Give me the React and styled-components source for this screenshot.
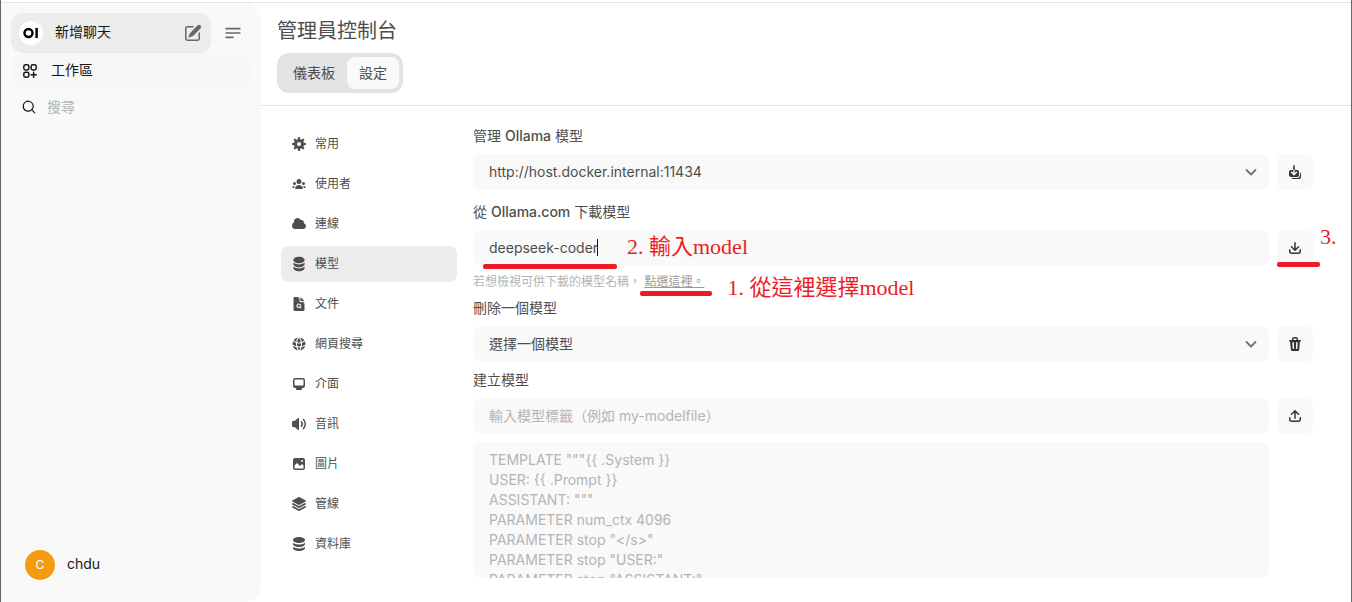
import React, { useState } from "react";
import styled, { createGlobalStyle } from "styled-components";
import {
  HiDocumentMagnifyingGlass,
  HiGlobeAlt,
  HiSquare3Stack3D,
  HiOutlineSquaresPlus,
  HiOutlineBars3BottomLeft,
} from "react-icons/hi2";

const trayPath =
  "M3.5 9.75a.75.75 0 0 0-1.5 0v1.5A2.75 2.75 0 0 0 4.75 14h6.5A2.75 2.75 0 0 0 14 11.25v-1.5a.75.75 0 0 0-1.5 0v1.5c0 .69-.56 1.25-1.25 1.25h-6.5c-.69 0-1.25-.56-1.25-1.25v-1.5Z";

const paths = {
  cog: [
    "M6.955 1.45A.5.5 0 0 1 7.452 1h1.096a.5.5 0 0 1 .497.45l.17 1.699c.484.12.94.312 1.356.562l1.321-1.081a.5.5 0 0 1 .67.033l.774.775a.5.5 0 0 1 .034.67l-1.08 1.32c.25.417.44.873.561 1.357l1.699.17a.5.5 0 0 1 .45.497v1.096a.5.5 0 0 1-.45.497l-1.699.17c-.12.484-.312.94-.562 1.356l1.082 1.322a.5.5 0 0 1-.034.67l-.774.774a.5.5 0 0 1-.67.033l-1.322-1.08c-.416.25-.872.44-1.356.561l-.17 1.699a.5.5 0 0 1-.497.45H7.452a.5.5 0 0 1-.497-.45l-.17-1.699a4.973 4.973 0 0 1-1.356-.562L4.108 13.37a.5.5 0 0 1-.67-.033l-.774-.775a.5.5 0 0 1-.034-.67l1.08-1.32a4.971 4.971 0 0 1-.561-1.357l-1.699-.17A.5.5 0 0 1 1 8.548V7.452a.5.5 0 0 1 .45-.497l1.699-.17c.12-.484.312-.94.562-1.356L2.629 4.107a.5.5 0 0 1 .034-.67l.774-.774a.5.5 0 0 1 .67-.033L5.43 3.71a4.97 4.97 0 0 1 1.356-.561l.17-1.699ZM6 8c0 .538.212 1.026.558 1.385l.057.057a2 2 0 0 0 2.828-2.828l-.058-.056A2 2 0 0 0 6 8Z",
  ],
  users: [
    "M8 8a2.5 2.5 0 1 0 0-5 2.5 2.5 0 0 0 0 5ZM3.156 11.763c.16-.629.44-1.21.813-1.72a2.5 2.5 0 0 0-2.725 1.377c-.136.287.102.58.418.58h1.449c.01-.077.025-.156.045-.237ZM12.847 11.763c.02.08.036.16.046.237h1.446c.316 0 .554-.293.417-.579a2.5 2.5 0 0 0-2.722-1.378c.374.51.653 1.09.813 1.72ZM14 7.5a1.5 1.5 0 1 1-3 0 1.5 1.5 0 0 1 3 0ZM3.5 9a1.5 1.5 0 1 0 0-3 1.5 1.5 0 0 0 0 3ZM5 13c-.552 0-1.013-.455-.876-.99a4.002 4.002 0 0 1 7.753 0c.136.535-.324.99-.877.99H5Z",
  ],
  cloud: [
    "M1 9.5A3.5 3.5 0 0 0 4.5 13H12a3 3 0 0 0 .917-5.857 2.503 2.503 0 0 0-3.198-3.019 3.5 3.5 0 0 0-6.628 2.171A3.5 3.5 0 0 0 1 9.5Z",
  ],
  models: [
    "M10 1c3.866 0 7 1.79 7 4s-3.134 4-7 4-7-1.79-7-4 3.134-4 7-4zm5.694 8.13c.464-.264.91-.583 1.306-.952V10c0 2.21-3.134 4-7 4s-7-1.79-7-4V8.178c.396.37.842.688 1.306.953C5.838 10.006 7.854 10.5 10 10.5s4.162-.494 5.694-1.37zM3 13.179V15c0 2.21 3.134 4 7 4s7-1.79 7-4v-1.822c-.396.37-.842.688-1.306.953-1.532.875-3.548 1.369-5.694 1.369s-4.162-.494-5.694-1.37A7.009 7.009 0 013 13.179z",
  ],
  database: [
    "M8 7c3.314 0 6-1.343 6-3s-2.686-3-6-3-6 1.343-6 3 2.686 3 6 3Z",
    "M8 8.5c1.84 0 3.579-.37 4.914-1.037A6.33 6.33 0 0 0 14 6.78V8c0 1.657-2.686 3-6 3S2 9.657 2 8V6.78c.346.273.72.5 1.087.683C4.42 8.131 6.16 8.5 8 8.5Z",
    "M8 12.5c1.84 0 3.579-.37 4.914-1.037.366-.183.74-.41 1.086-.684V12c0 1.657-2.686 3-6 3s-6-1.343-6-3v-1.22c.346.273.72.5 1.087.683C4.42 12.131 6.16 12.5 8 12.5Z",
  ],
  desktop: [
    "M2 4.25A2.25 2.25 0 0 1 4.25 2h7.5A2.25 2.25 0 0 1 14 4.25v5.5A2.25 2.25 0 0 1 11.75 12h-1.312c.1.128.21.248.328.36a.75.75 0 0 1 .234.545v.345a.75.75 0 0 1-.75.75h-4.5a.75.75 0 0 1-.75-.75v-.345a.75.75 0 0 1 .234-.545c.118-.111.228-.232.328-.36H4.25A2.25 2.25 0 0 1 2 9.75v-5.5Zm2.25-.75a.75.75 0 0 0-.75.75v4.5c0 .414.336.75.75.75h7.5a.75.75 0 0 0 .75-.75v-4.5a.75.75 0 0 0-.75-.75h-7.5Z",
  ],
  audio: [
    "M7.557 2.066A.75.75 0 0 1 8 2.75v10.5a.75.75 0 0 1-1.248.56L3.59 11H2a1 1 0 0 1-1-1V6a1 1 0 0 1 1-1h1.59l3.162-2.81a.75.75 0 0 1 .805-.124ZM12.95 3.05a.75.75 0 1 0-1.06 1.06 5.5 5.5 0 0 1 0 7.78.75.75 0 1 0 1.06 1.06 7 7 0 0 0 0-9.9Z",
    "M10.828 5.172a.75.75 0 1 0-1.06 1.06 2.5 2.5 0 0 1 0 3.536.75.75 0 1 0 1.06 1.06 4 4 0 0 0 0-5.656Z",
  ],
  image: [
    "M2 4a2 2 0 0 1 2-2h8a2 2 0 0 1 2 2v8a2 2 0 0 1-2 2H4a2 2 0 0 1-2-2V4Zm10.5 5.707a.5.5 0 0 0-.146-.353l-1-1a.5.5 0 0 0-.708 0L9.354 9.646a.5.5 0 0 1-.708 0L6.354 7.354a.5.5 0 0 0-.708 0l-2 2a.5.5 0 0 0-.146.353V12a.5.5 0 0 0 .5.5h8a.5.5 0 0 0 .5-.5V9.707ZM12 5a1 1 0 1 1-2 0 1 1 0 0 1 2 0Z",
  ],
  updateAll: [
    "M7 1a.75.75 0 0 1 .75.75V6h-1.5V1.75A.75.75 0 0 1 7 1ZM6.25 6v2.94L5.03 7.72a.75.75 0 0 0-1.06 1.06l2.5 2.5a.75.75 0 0 0 1.06 0l2.5-2.5a.75.75 0 1 0-1.06-1.06L7.75 8.94V6H10a2 2 0 0 1 2 2v3a2 2 0 0 1-2 2H4a2 2 0 0 1-2-2V8a2 2 0 0 1 2-2h2.25Z",
    "M4.268 14A2 2 0 0 0 6 15h6a2 2 0 0 0 2-2v-3a2 2 0 0 0-1-1.732V11a3 3 0 0 1-3 3H4.268Z",
  ],
  download: [
    "M8.75 2.75a.75.75 0 0 0-1.5 0v5.69L5.03 6.22a.75.75 0 0 0-1.06 1.06l3.5 3.5a.75.75 0 0 0 1.06 0l3.5-3.5a.75.75 0 0 0-1.06-1.06L8.75 8.44V2.75Z",
    trayPath,
  ],
  upload: [
    "M7.25 10.25a.75.75 0 0 0 1.5 0V4.56l2.22 2.22a.75.75 0 1 0 1.06-1.06l-3.5-3.5a.75.75 0 0 0-1.06 0l-3.5 3.5a.75.75 0 0 0 1.06 1.06l2.22-2.22v5.69Z",
    trayPath,
  ],
  trash: [
    "M5 3.25V4H2.75a.75.75 0 0 0 0 1.5h.3l.815 8.15A1.5 1.5 0 0 0 5.357 15h5.285a1.5 1.5 0 0 0 1.493-1.35l.815-8.15h.3a.75.75 0 0 0 0-1.5H11v-.75A2.25 2.25 0 0 0 8.75 1h-1.5A2.25 2.25 0 0 0 5 3.25Zm2.25-.75a.75.75 0 0 0-.75.75V4h3v-.75a.75.75 0 0 0-.75-.75h-1.5ZM6.05 6a.75.75 0 0 1 .787.713l.275 5.5a.75.75 0 0 1-1.498.075l-.275-5.5A.75.75 0 0 1 6.05 6Zm3.9 0a.75.75 0 0 1 .712.787l-.275 5.5a.75.75 0 0 1-1.498-.075l.275-5.5a.75.75 0 0 1 .786-.711Z",
  ],
  pencil: [
    "m5.433 13.917 1.262-3.155A4 4 0 0 1 7.58 9.42l6.92-6.918a2.121 2.121 0 0 1 3 3l-6.92 6.918c-.383.383-.84.685-1.343.886l-3.154 1.262a.5.5 0 0 1-.65-.65Z",
    "M3.5 5.75c0-.69.56-1.25 1.25-1.25H10A.75.75 0 0 0 10 3H4.75A2.75 2.75 0 0 0 2 5.75v9.5A2.75 2.75 0 0 0 4.75 18h9.5A2.75 2.75 0 0 0 17 15.25V10a.75.75 0 0 0-1.5 0v5.25c0 .69-.56 1.25-1.25 1.25h-9.5c-.69 0-1.25-.56-1.25-1.25v-9.5Z",
  ],
  search: [
    "M9 3.5a5.5 5.5 0 100 11 5.5 5.5 0 000-11zM2 9a7 7 0 1112.452 4.391l3.328 3.329a.75.75 0 11-1.06 1.06l-3.329-3.328A7 7 0 012 9z",
  ],
};

const Icon = ({ name, size = 16, box = 16 }) => (
  <svg
    width={size}
    height={size}
    viewBox={`0 0 ${box} ${box}`}
    fill="currentColor"
    aria-hidden="true"
  >
    {paths[name].map((d) => (
      <path key={d} d={d} fillRule="evenodd" clipRule="evenodd" />
    ))}
  </svg>
);

const menus = [
  { label: "常用", icon: <Icon name="cog" /> },
  { label: "使用者", icon: <Icon name="users" /> },
  { label: "連線", icon: <Icon name="cloud" /> },
  { label: "模型", icon: <Icon name="models" box={20} /> },
  { label: "文件", icon: <HiDocumentMagnifyingGlass size={16} /> },
  { label: "網頁搜尋", icon: <HiGlobeAlt size={16} /> },
  { label: "介面", icon: <Icon name="desktop" /> },
  { label: "音訊", icon: <Icon name="audio" /> },
  { label: "圖片", icon: <Icon name="image" /> },
  { label: "管線", icon: <HiSquare3Stack3D size={16} /> },
  { label: "資料庫", icon: <Icon name="database" /> },
];

const modelfileHint = `TEMPLATE """{{ .System }}
USER: {{ .Prompt }}
ASSISTANT: """
PARAMETER num_ctx 4096
PARAMETER stop "</s>"
PARAMETER stop "USER:"
PARAMETER stop "ASSISTANT:"`;

const Logo = () => (
  <StLogo>
    <svg width="16" height="12" viewBox="0 0 16 12" aria-hidden="true">
      <circle cx="5.5" cy="6" r="4" fill="none" stroke="#000" strokeWidth="2.4" />
      <rect x="12.4" y="0.9" width="2.4" height="10.2" fill="#000" />
    </svg>
  </StLogo>
);

const Sidebar = () => (
  <StSidebar>
    <StSidebarTop>
      <StNewChat href="#new">
        <Logo />
        <span className="label">新增聊天</span>
        <Icon name="pencil" size={20} box={20} />
      </StNewChat>
      <StMenuBtn type="button" aria-label="選單">
        <HiOutlineBars3BottomLeft size={20} strokeWidth={2} />
      </StMenuBtn>
    </StSidebarTop>
    <StWorkspace href="#workspace">
      <HiOutlineSquaresPlus size={18} strokeWidth={2} />
      <span className="label">工作區</span>
    </StWorkspace>
    <StSearch>
      <Icon name="search" box={20} />
      <input type="text" placeholder="搜尋" aria-label="搜尋" />
    </StSearch>
    <StUser type="button">
      <span className="avatar">C</span>
      <span className="label">chdu</span>
    </StUser>
  </StSidebar>
);

const SelectBox = ({ id, children }) => (
  <StField>
    <StSelect id={id}>{children}</StSelect>
    <StChevron width="20" height="20" viewBox="0 0 20 20" aria-hidden="true">
      <path
        d="M5.5 8l4.5 4.5L14.5 8"
        fill="none"
        stroke="#6b7280"
        strokeWidth="1.8"
        strokeLinecap="round"
        strokeLinejoin="round"
      />
    </StChevron>
  </StField>
);

const ModelSettings = () => {
  const [model, setModel] = useState("deepseek-coder");

  return (
    <StForm onSubmit={(e) => e.preventDefault()}>
      <StGroup>
        <StLabel htmlFor="server">
          管理 <span>Ollama</span> 模型
        </StLabel>
        <StRow>
          <SelectBox id="server">
            <option>http://host.docker.internal:11434</option>
          </SelectBox>
          <StIconBtn type="button" aria-label="更新所有模型">
            <Icon name="updateAll" />
          </StIconBtn>
        </StRow>
      </StGroup>

      <StGroup $gap="12px">
        <StLabel htmlFor="pull">
          從 <span>Ollama.com</span> 下載模型
        </StLabel>
        <StRow>
          <StField>
            <StInput
              id="pull"
              value={model}
              onChange={(e) => setModel(e.target.value)}
            />
            <StCaret />
            <StMark $left="10px" $top="34px" $width="134px" />
            <StNote $left="154px" $top="4px">
              2. 輸入model
            </StNote>
          </StField>
          <StAnchor>
            <StIconBtn type="button" aria-label="下載">
              <Icon name="download" />
            </StIconBtn>
            <StMark $left="0" $top="32px" $width="43px" />
            <StNote $left="43px" $top="-6px">
              3.
            </StNote>
          </StAnchor>
        </StRow>
        <StHint>
          若想檢視可供下載的模型名稱，{" "}
          <StAnchor>
            <a href="#library">點選這裡。</a>
            <StMark $left="-4px" $top="17px" $width="72px" />
            <StNote $left="83px" $top="1px">
              1. 從這裡選擇model
            </StNote>
          </StAnchor>
        </StHint>
      </StGroup>

      <StGroup $gap="8px">
        <StLabel htmlFor="remove">刪除一個模型</StLabel>
        <StRow>
          <SelectBox id="remove">
            <option>選擇一個模型</option>
          </SelectBox>
          <StIconBtn type="button" aria-label="刪除">
            <Icon name="trash" />
          </StIconBtn>
        </StRow>
      </StGroup>

      <StGroup $gap="8px">
        <StLabel htmlFor="create">建立模型</StLabel>
        <StRow>
          <StField>
            <StInput id="create" placeholder="輸入模型標籤（例如 my-modelfile）" />
          </StField>
          <StIconBtn type="button" aria-label="上傳">
            <Icon name="upload" />
          </StIconBtn>
        </StRow>
        <StTextarea aria-label="Modelfile" placeholder={modelfileHint} />
      </StGroup>
    </StForm>
  );
};

const App = () => {
  const [current, setCurrent] = useState("模型");

  return (
    <>
      <GlobalStyle />
      <StPage lang="zh-Hant">
        <StShell>
          <Sidebar />
          <StMain>
            <StHeader>
              <h1>管理員控制台</h1>
              <StTabs>
                <StTab href="#dashboard">儀表板</StTab>
                <StTab href="#settings" $active>
                  設定
                </StTab>
              </StTabs>
            </StHeader>
            <StBody>
              <StNav>
                {menus.map((menu) => (
                  <StNavBtn
                    key={menu.label}
                    type="button"
                    $active={menu.label === current}
                    onClick={() => setCurrent(menu.label)}
                  >
                    {menu.icon}
                    {menu.label}
                  </StNavBtn>
                ))}
              </StNav>
              <ModelSettings />
            </StBody>
          </StMain>
        </StShell>
      </StPage>
    </>
  );
};

export default App;

const GlobalStyle = createGlobalStyle`
  * {
    box-sizing: border-box;
  }
  body {
    margin: 0;
    background-color: #fff;
    color: #4e4e4e;
    font-family: Inter, "Noto Sans CJK TC", sans-serif;
    font-size: 14px;
    line-height: 20px;
  }
  button, input, select, textarea {
    margin: 0;
    border: none;
    outline: none;
    color: inherit;
    font: inherit;
  }
  button {
    cursor: pointer;
  }
  a {
    color: inherit;
    text-decoration: none;
  }
  svg {
    flex-shrink: 0;
  }
`;

const StPage = styled.div`
  display: flex;
  height: 100vh;
  padding-top: 2px;
  border-left: 1px solid #66666b;
  border-right: 1px solid #66666b;
  overflow: hidden;
`;

const StShell = styled.div`
  display: flex;
  flex: 1;
  min-width: 0;
  border-top: 1px solid #e3e3e3;
`;

const StSidebar = styled.aside`
  display: flex;
  flex-direction: column;
  flex-shrink: 0;
  width: 260px;
  padding: 10px 10px 22px;
  border-radius: 0 16px 16px 0;
  background-color: #f9f9f9;
  color: #171717;

  .label {
    padding-bottom: 2px;
  }
`;

const StSidebarTop = styled.div`
  display: flex;
  gap: 4px;
`;

const StNewChat = styled.a`
  display: flex;
  flex: 1;
  align-items: center;
  gap: 12px;
  height: 40px;
  padding: 0 8px;
  border-radius: 12px;
  background-color: #ececec;

  .label {
    flex: 1;
  }
  & > svg {
    color: #676767;
  }
`;

const StLogo = styled.span`
  display: flex;
  align-items: center;
  justify-content: center;
  width: 24px;
  height: 24px;
  border-radius: 50%;
  background-color: #fff;
`;

const StMenuBtn = styled.button`
  display: flex;
  align-items: center;
  justify-content: center;
  width: 36px;
  padding: 0;
  background-color: transparent;
  color: #676767;
`;

const StWorkspace = styled.a`
  display: flex;
  align-items: center;
  gap: 12px;
  height: 36px;
  padding: 0 10px;
  border-radius: 12px;
  background-color: #f7f7f7;
`;

const StSearch = styled.label`
  display: flex;
  align-items: center;
  gap: 10px;
  height: 36px;
  padding: 0 10px;

  input {
    flex: 1;
    min-width: 0;
    padding: 0;
    background-color: transparent;
  }
  input::placeholder {
    color: #b4b4b4;
  }
`;

const StUser = styled.button`
  display: flex;
  align-items: center;
  gap: 12px;
  margin-top: auto;
  padding: 0 14px;
  background-color: transparent;

  .avatar {
    width: 30px;
    height: 30px;
    border-radius: 50%;
    background-color: #f39c12;
    color: #fff;
    font-size: 12px;
    line-height: 30px;
    text-align: center;
  }
`;

const StMain = styled.main`
  display: flex;
  flex: 1;
  flex-direction: column;
  min-width: 0;
`;

const StHeader = styled.header`
  display: flex;
  flex-direction: column;
  align-items: flex-start;
  gap: 8px;
  padding: 14px 16px 12px;
  border-bottom: 1px solid #e3e3e3;

  h1 {
    margin: 0;
    font-size: 20px;
    font-weight: 400;
    line-height: 28px;
  }
`;

const StTabs = styled.nav`
  display: flex;
  padding: 4px;
  border-radius: 12px;
  background-color: #e3e3e3;
`;

const StTab = styled.a`
  padding: 6px 12px;
  border-radius: 8px;
  background-color: ${({ $active }) => ($active ? "#f9f9f9" : "transparent")};
`;

const StBody = styled.div`
  display: flex;
  gap: 16px;
  padding: 20px 38px 0 20px;
`;

const StNav = styled.nav`
  display: flex;
  flex-direction: column;
  flex-shrink: 0;
  gap: 4px;
  width: 176px;
`;

const StNavBtn = styled.button`
  display: flex;
  align-items: center;
  gap: 8px;
  height: 36px;
  padding: 0 10px;
  border-radius: 8px;
  background-color: ${({ $active }) => ($active ? "#ececec" : "transparent")};
  font-size: 12px;
`;

const StForm = styled.form`
  flex: 1;
  min-width: 0;
`;

const StGroup = styled.div`
  display: flex;
  flex-direction: column;
  gap: 8px;
  margin-top: ${({ $gap }) => $gap || "0"};
`;

const StLabel = styled.label`
  span {
    font-weight: 500;
  }
`;

const StRow = styled.div`
  display: flex;
  gap: 8px;
`;

const StField = styled.div`
  position: relative;
  display: flex;
  flex: 1;
  min-width: 0;
`;

const StInput = styled.input`
  width: 100%;
  height: 36px;
  padding: 0 16px 2px;
  border-radius: 8px;
  background-color: #f9f9f9;

  &::placeholder {
    color: #b4b4b4;
  }
`;

const StSelect = styled.select`
  width: 100%;
  height: 36px;
  padding: 0 40px 0 16px;
  border-radius: 8px;
  background-color: #f9f9f9;
  appearance: none;
`;

const StChevron = styled.svg`
  position: absolute;
  top: 8px;
  right: 8px;
  pointer-events: none;
`;

const StTextarea = styled.textarea`
  display: block;
  height: 136px;
  margin-right: 44px;
  padding: 8px 16px;
  border-radius: 8px;
  background-color: #f9f9f9;
  overflow: hidden;
  resize: none;

  &::placeholder {
    color: #b4b4b4;
  }
`;

const StIconBtn = styled.button`
  display: flex;
  align-items: center;
  justify-content: center;
  width: 36px;
  height: 36px;
  padding: 0;
  border-radius: 8px;
  background-color: #f9f9f9;
  color: #333;
`;

const StHint = styled.div`
  color: #b4b4b4;
  font-size: 12px;
  line-height: 16px;

  a {
    color: #9b9b9b;
    text-decoration: underline;
  }
`;

const StAnchor = styled.span`
  position: relative;
`;

const StCaret = styled.span`
  position: absolute;
  top: 9px;
  left: 124px;
  width: 1px;
  height: 17px;
  background-color: #171717;
`;

// red pen notes laid over the form
const StMark = styled.span`
  position: absolute;
  top: ${({ $top }) => $top};
  left: ${({ $left }) => $left};
  width: ${({ $width }) => $width};
  height: 5px;
  border-radius: 2px;
  background-color: #ed1c24;
`;

const StNote = styled.span`
  position: absolute;
  top: ${({ $top }) => $top};
  left: ${({ $left }) => $left};
  color: #ed1c24;
  font-family: "Liberation Serif", "Noto Sans CJK TC", serif;
  font-size: 22px;
  line-height: 26px;
  white-space: nowrap;
`;
